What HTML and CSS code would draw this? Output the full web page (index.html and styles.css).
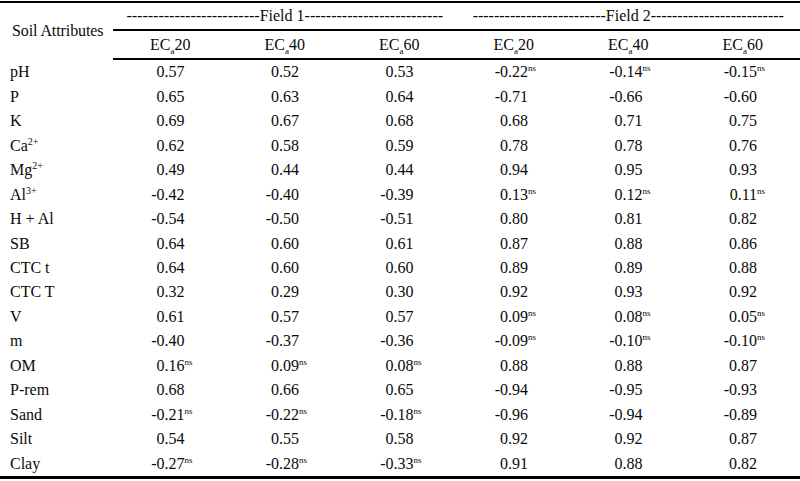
FILE: index.html
```html
<!DOCTYPE html>
<html lang="en">
<head>
<meta charset="utf-8">
<title>Soil Attributes correlation table</title>
<link rel="stylesheet" href="styles.css">
</head>
<body>
<table class="corr">
  <colgroup>
    <col class="c-label">
    <col class="c-val"><col class="c-val"><col class="c-val">
    <col class="c-val"><col class="c-val"><col class="c-val">
  </colgroup>
  <thead>
    <tr class="h1">
      <th class="attr" rowspan="2">Soil Attributes</th>
      <th class="field" colspan="3">-------------------------Field 1--------------------------</th>
      <th class="field" colspan="3">-------------------------Field 2-------------------------</th>
    </tr>
    <tr class="h2">
      <th>EC<sub>a</sub>20</th><th>EC<sub>a</sub>40</th><th>EC<sub>a</sub>60</th>
      <th>EC<sub>a</sub>20</th><th>EC<sub>a</sub>40</th><th>EC<sub>a</sub>60</th>
    </tr>
  </thead>
  <tbody>
    <tr><td>pH</td><td>0.57</td><td>0.52</td><td>0.53</td><td>-0.22<sup class="ns">ns</sup></td><td>-0.14<sup class="ns">ns</sup></td><td>-0.15<sup class="ns">ns</sup></td></tr>
    <tr><td>P</td><td>0.65</td><td>0.63</td><td>0.64</td><td>-0.71</td><td>-0.66</td><td>-0.60</td></tr>
    <tr><td>K</td><td>0.69</td><td>0.67</td><td>0.68</td><td>0.68</td><td>0.71</td><td>0.75</td></tr>
    <tr><td>Ca<sup class="ion">2+</sup></td><td>0.62</td><td>0.58</td><td>0.59</td><td>0.78</td><td>0.78</td><td>0.76</td></tr>
    <tr><td>Mg<sup class="ion">2+</sup></td><td>0.49</td><td>0.44</td><td>0.44</td><td>0.94</td><td>0.95</td><td>0.93</td></tr>
    <tr><td>Al<sup class="ion">3+</sup></td><td>-0.42</td><td>-0.40</td><td>-0.39</td><td>0.13<sup class="ns">ns</sup></td><td>0.12<sup class="ns">ns</sup></td><td>0.11<sup class="ns">ns</sup></td></tr>
    <tr><td>H + Al</td><td>-0.54</td><td>-0.50</td><td>-0.51</td><td>0.80</td><td>0.81</td><td>0.82</td></tr>
    <tr><td>SB</td><td>0.64</td><td>0.60</td><td>0.61</td><td>0.87</td><td>0.88</td><td>0.86</td></tr>
    <tr><td>CTC t</td><td>0.64</td><td>0.60</td><td>0.60</td><td>0.89</td><td>0.89</td><td>0.88</td></tr>
    <tr><td>CTC T</td><td>0.32</td><td>0.29</td><td>0.30</td><td>0.92</td><td>0.93</td><td>0.92</td></tr>
    <tr><td>V</td><td>0.61</td><td>0.57</td><td>0.57</td><td>0.09<sup class="ns">ns</sup></td><td>0.08<sup class="ns">ns</sup></td><td>0.05<sup class="ns">ns</sup></td></tr>
    <tr><td>m</td><td>-0.40</td><td>-0.37</td><td>-0.36</td><td>-0.09<sup class="ns">ns</sup></td><td>-0.10<sup class="ns">ns</sup></td><td>-0.10<sup class="ns">ns</sup></td></tr>
    <tr><td>OM</td><td>0.16<sup class="ns">ns</sup></td><td>0.09<sup class="ns">ns</sup></td><td>0.08<sup class="ns">ns</sup></td><td>0.88</td><td>0.88</td><td>0.87</td></tr>
    <tr><td>P-rem</td><td>0.68</td><td>0.66</td><td>0.65</td><td>-0.94</td><td>-0.95</td><td>-0.93</td></tr>
    <tr><td>Sand</td><td>-0.21<sup class="ns">ns</sup></td><td>-0.22<sup class="ns">ns</sup></td><td>-0.18<sup class="ns">ns</sup></td><td>-0.96</td><td>-0.94</td><td>-0.89</td></tr>
    <tr><td>Silt</td><td>0.54</td><td>0.55</td><td>0.58</td><td>0.92</td><td>0.92</td><td>0.87</td></tr>
    <tr><td>Clay</td><td>-0.27<sup class="ns">ns</sup></td><td>-0.28<sup class="ns">ns</sup></td><td>-0.33<sup class="ns">ns</sup></td><td>0.91</td><td>0.88</td><td>0.82</td></tr>
  </tbody>
</table>
</body>
</html>
```
FILE: styles.css
```css
html, body {
  margin: 0;
  padding: 0;
  background: #ffffff;
}
body {
  font-family: "Liberation Serif", "Times New Roman", serif;
  font-size: 16px;
  color: #0a0a0a;
}
.corr {
  width: 800px;
  border-collapse: collapse;
  table-layout: fixed;
  margin-top: 1px;
  border-top: 2px solid #000;
  border-bottom: 3px solid #000;
}
.c-label { width: 113px; }
.c-val { width: 114.5px; }
.corr th {
  font-weight: normal;
  padding: 0;
  line-height: 18px;
}
.h1 { height: 28px; }
.h2 { height: 29px; }
.h2 th { border-bottom: 2px solid #000; text-align: center; }
.attr {
  text-align: left;
  padding-left: 12px !important;
  font-size: 16px;
  letter-spacing: -0.1px;
}
.field {
  border-bottom: 2px solid #000;
  text-align: center;
  white-space: nowrap;
  overflow: hidden;
}
sub {
  font-size: 9px;
  vertical-align: -4px;
  line-height: 0;
}
.corr td {
  height: 24.47px;
  padding: 0 43px 0 0;
  text-align: right;
  line-height: 18px;
  vertical-align: middle;
}
.corr td:first-child {
  text-align: left;
  padding: 0 0 0 10px;
}
.ns {
  display: inline-block;
  width: 0;
  font-size: 9px;
  line-height: 0;
  vertical-align: 6px;
  overflow: visible;
}
.ion {
  font-size: 10px;
  line-height: 0;
  vertical-align: 6px;
}
```
